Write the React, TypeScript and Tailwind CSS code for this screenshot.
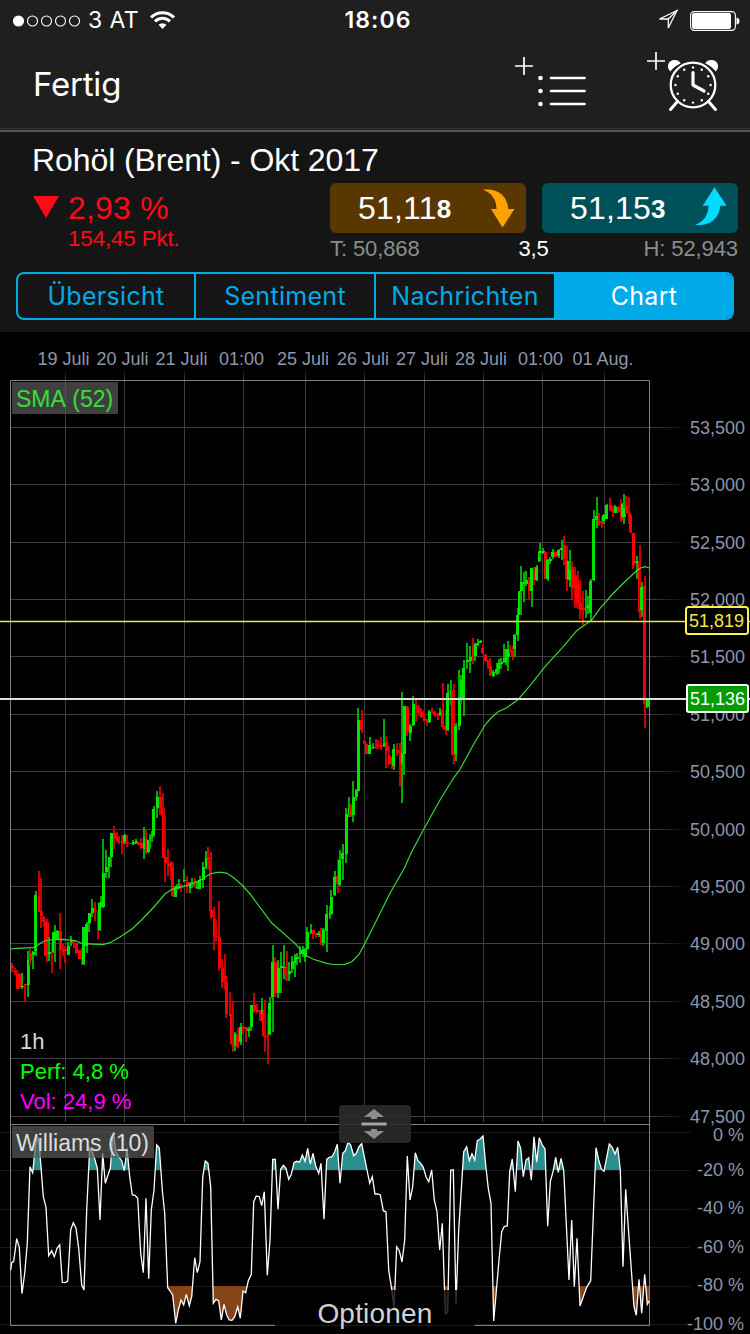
import { FC } from "react";

type Candle = [x: number, high: number, top: number, bottom: number, low: number, up: 0 | 1];
type Point = [x: number, y: number];

interface Block<T> {
  x: number;
  y: number;
  data: T[];
}

// Every block has its own origin, values inside are in thirds of a pixel
const candleBlocks: Block<Candle>[] = [
  {
    x: 0,
    y: 840,
    data: [
      [36, 370, 378, 384, 396, 0], [44, 385, 392, 396, 404, 0], [52, 390, 402, 445, 448, 0], [58, 400, 402, 445, 448, 0],
      [66, 400, 438, 442, 446, 1], [75, 432, 433, 436, 486, 0], [84, 333, 360, 436, 470, 1], [90, 327, 340, 360, 378, 0],
      [99, 333, 335, 345, 387, 1], [107, 153, 165, 333, 348, 1], [117, 93, 168, 212, 215, 0], [123, 114, 212, 228, 264, 0],
      [131, 228, 230, 246, 262, 0], [136, 237, 246, 345, 348, 0], [141, 237, 246, 345, 366, 0], [147, 291, 336, 342, 363, 1],
      [156, 306, 336, 340, 399, 0], [161, 276, 276, 336, 340, 1], [165, 255, 276, 300, 366, 1], [171, 270, 274, 300, 300, 1],
      [180, 219, 273, 330, 387, 0], [189, 312, 327, 336, 348, 0], [195, 318, 327, 333, 369, 0], [204, 306, 318, 344, 345, 1],
      [213, 288, 300, 305, 318, 1], [221, 300, 303, 310, 324, 0], [228, 309, 309, 340, 342, 0], [237, 330, 330, 356, 358, 0],
      [246, 324, 354, 360, 375, 0], [251, 261, 262, 372, 375, 1], [260, 246, 252, 318, 339, 1], [268, 219, 220, 248, 276, 1],
      [276, 177, 205, 219, 230, 1], [285, 186, 210, 214, 243, 0], [294, 213, 213, 267, 297, 0], [299, 186, 188, 270, 273, 1],
      [303, 168, 186, 200, 201, 1],
    ],
  },
  {
    x: 100,
    y: 780,
    data: [
      [9, 177, 278, 380, 384, 1], [18, 210, 260, 276, 294, 1], [27, 230, 232, 260, 294, 1], [33, 158, 160, 232, 260, 1],
      [42, 138, 158, 178, 207, 0], [51, 156, 170, 183, 186, 0], [58, 168, 183, 186, 192, 0], [66, 165, 186, 192, 222, 0],
      [74, 162, 165, 187, 192, 1], [81, 165, 187, 190, 201, 0], [90, 188, 189, 192, 192, 0], [99, 180, 185, 192, 196, 1],
      [108, 177, 184, 188, 192, 1], [116, 186, 187, 195, 196, 0], [124, 174, 190, 204, 207, 0], [132, 141, 174, 207, 237, 1],
      [138, 150, 177, 216, 222, 0], [144, 180, 180, 217, 218, 1], [150, 162, 174, 178, 206, 1], [156, 153, 168, 172, 186, 1],
      [161, 78, 87, 165, 168, 1], [171, 33, 52, 84, 114, 1], [180, 18, 50, 84, 105, 0], [188, 40, 84, 108, 110, 0],
      [191, 84, 108, 233, 234, 0], [195, 108, 230, 248, 306, 0], [204, 207, 250, 258, 288, 0], [213, 243, 250, 264, 300, 0],
      [218, 246, 264, 348, 351, 0], [226, 318, 324, 350, 351, 1], [230, 312, 318, 324, 330, 1], [237, 297, 318, 322, 327, 1],
      [243, 312, 316, 320, 336, 0], [252, 267, 300, 304, 306, 1], [261, 288, 306, 316, 339, 0], [270, 306, 312, 324, 339, 1],
      [276, 294, 308, 312, 324, 1], [284, 294, 306, 322, 324, 0], [292, 303, 320, 324, 326, 1], [299, 288, 300, 326, 327, 1],
      [309, 246, 262, 300, 324, 1], [318, 213, 234, 260, 267, 1], [324, 201, 230, 238, 270, 0], [331, 238, 240, 390, 393, 0],
      [333, 216, 390, 412, 417, 0], [342, 381, 417, 467, 510, 0], [348, 420, 467, 472, 486, 0], [357, 363, 470, 564, 573, 0],
      [366, 537, 564, 605, 624, 0], [375, 522, 588, 606, 630, 0], [379, 594, 605, 702, 714, 0], [390, 636, 702, 706, 708, 0],
      [395, 702, 702, 793, 796, 0], [399, 666, 793, 797, 816, 0], [405, 756, 762, 796, 813, 1], [413, 744, 764, 802, 804, 0],
      [422, 730, 742, 786, 795, 1], [429, 738, 742, 746, 762, 0], [438, 741, 742, 746, 786, 0], [446, 740, 748, 752, 771, 1],
      [453, 675, 676, 742, 753, 1], [462, 639, 675, 694, 699, 0], [471, 672, 690, 697, 700, 0], [480, 690, 697, 702, 723, 0],
      [486, 654, 690, 702, 723, 1], [491, 690, 692, 767, 770, 0], [495, 660, 767, 768, 816, 0], [504, 702, 764, 768, 852, 0],
      [509, 651, 668, 762, 765, 1], [516, 546, 546, 652, 654, 1], [519, 495, 546, 650, 756, 1], [526, 531, 545, 638, 651, 0],
      [534, 540, 565, 640, 654, 1], [543, 516, 558, 563, 639, 1], [552, 495, 561, 565, 597, 1], [557, 564, 564, 583, 600, 0],
      [561, 513, 582, 584, 603, 0], [567, 546, 572, 582, 603, 1], [576, 528, 542, 568, 579, 1], [585, 522, 532, 550, 591, 1],
      [591, 520, 530, 536, 555, 1], [600, 498, 512, 522, 549, 1], [609, 498, 508, 522, 530, 1], [615, 505, 508, 530, 546, 1],
      [622, 441, 456, 508, 510, 1], [633, 432, 450, 456, 462, 1], [640, 450, 450, 462, 477, 0], [648, 459, 460, 466, 474, 0],
      [656, 452, 460, 466, 471, 1], [663, 444, 462, 490, 495, 0], [669, 444, 450, 490, 498, 1], [680, 375, 402, 452, 516, 1],
      [690, 378, 400, 404, 417, 1], [694, 330, 350, 402, 405, 1], [704, 273, 291, 346, 348, 1], [713, 237, 287, 312, 339, 0],
      [719, 210, 240, 314, 317, 1], [728, 192, 220, 238, 300, 1], [738, 84, 102, 222, 249, 1],
    ],
  },
  {
    x: 250,
    y: 680,
    data: [
      [297, 351, 384, 402, 412, 1], [302, 372, 382, 408, 411, 0], [310, 303, 350, 405, 426, 1], [318, 326, 332, 350, 363, 1],
      [325, 84, 120, 334, 336, 1], [335, 90, 120, 150, 159, 0], [342, 180, 184, 190, 192, 0], [349, 189, 192, 221, 222, 0],
      [359, 171, 195, 221, 222, 1], [369, 189, 200, 202, 207, 1], [378, 177, 192, 198, 207, 0], [384, 180, 194, 198, 207, 0],
      [393, 171, 195, 200, 210, 0], [402, 117, 189, 198, 200, 1], [408, 168, 186, 212, 264, 0], [418, 198, 228, 252, 255, 0],
      [426, 231, 233, 254, 267, 0], [431, 192, 206, 258, 270, 1], [441, 189, 210, 218, 228, 0], [450, 189, 222, 254, 318, 0],
      [456, 36, 219, 250, 369, 1], [463, 78, 78, 222, 285, 1], [471, 78, 80, 156, 168, 0], [480, 132, 138, 158, 183, 1],
      [489, 48, 72, 136, 138, 1], [498, 57, 78, 88, 126, 0], [506, 75, 88, 98, 108, 0], [513, 84, 96, 112, 114, 0],
      [522, 90, 114, 120, 126, 0], [530, 117, 120, 124, 138, 0], [537, 90, 96, 126, 129, 1], [545, 84, 93, 96, 98, 0],
      [554, 93, 96, 104, 112, 0], [563, 99, 102, 104, 120, 0], [570, 84, 96, 104, 108, 1],
    ],
  },
  {
    x: 430,
    y: 480,
    data: [
      [38, 609, 690, 741, 747, 0], [47, 690, 738, 750, 765, 0], [53, 612, 640, 750, 753, 1], [63, 600, 634, 645, 675, 1],
      [67, 630, 630, 823, 826, 0], [72, 612, 822, 826, 852, 0], [77, 729, 738, 822, 843, 1], [87, 570, 650, 738, 750, 1],
      [94, 585, 600, 655, 672, 1], [101, 540, 565, 655, 708, 1], [111, 489, 540, 546, 567, 1], [120, 498, 530, 544, 579, 1],
      [129, 474, 500, 532, 552, 0], [135, 490, 492, 528, 543, 1], [143, 477, 489, 494, 498, 1], [152, 480, 484, 488, 490, 1],
      [158, 492, 504, 520, 522, 0], [167, 522, 524, 543, 546, 0], [174, 540, 543, 558, 566, 0], [181, 534, 558, 584, 587, 0],
      [189, 570, 576, 587, 591, 1], [200, 549, 566, 578, 585, 1], [206, 537, 550, 566, 582, 1], [214, 534, 546, 552, 567, 1],
      [222, 492, 534, 546, 549, 1], [229, 507, 508, 545, 555, 1], [234, 483, 508, 530, 573, 1], [240, 495, 510, 516, 520, 0],
      [248, 498, 514, 530, 540, 0], [254, 462, 466, 508, 531, 1], [263, 384, 404, 465, 483, 1], [269, 333, 333, 404, 405, 1],
      [273, 258, 306, 333, 404, 1], [282, 276, 306, 312, 366, 1], [288, 273, 300, 312, 318, 1], [297, 291, 306, 334, 357, 0],
      [305, 264, 264, 332, 381, 1], [313, 261, 275, 300, 315, 0], [320, 255, 262, 300, 303, 1], [327, 213, 216, 243, 246, 1],
      [331, 189, 213, 218, 234, 1], [339, 204, 213, 219, 222, 1], [345, 216, 217, 295, 297, 0], [353, 237, 240, 297, 303, 1],
      [360, 231, 238, 242, 252, 1], [368, 207, 215, 232, 236, 1], [376, 213, 216, 230, 231, 0], [386, 207, 210, 228, 234, 1],
      [395, 180, 205, 210, 240, 1], [402, 168, 196, 238, 255, 0], [410, 198, 240, 296, 333, 0], [415, 242, 244, 298, 300, 1],
      [420, 210, 270, 300, 320, 1], [426, 243, 262, 324, 360, 0], [434, 261, 285, 324, 384, 0], [440, 285, 288, 370, 384, 0],
      [444, 273, 310, 372, 386, 0], [451, 300, 370, 390, 417, 0], [459, 333, 385, 390, 435, 0], [468, 330, 381, 384, 414, 1],
      [475, 348, 376, 384, 402, 1], [482, 297, 303, 400, 426, 1], [491, 90, 118, 300, 303, 1], [500, 51, 108, 120, 144, 1],
      [507, 99, 122, 128, 138, 0], [516, 110, 125, 132, 144, 0], [521, 102, 104, 122, 132, 1], [530, 72, 75, 117, 118, 1],
      [540, 54, 74, 90, 92, 0], [548, 78, 90, 96, 110, 0], [555, 76, 80, 98, 99, 1], [564, 78, 82, 97, 99, 0],
      [573, 57, 97, 120, 126, 0], [578, 70, 73, 112, 114, 1], [582, 42, 84, 112, 132, 1], [588, 48, 78, 98, 102, 0],
      [597, 51, 98, 104, 132, 0], [602, 105, 106, 156, 159, 0], [610, 159, 160, 256, 267, 0], [620, 228, 243, 250, 297, 1],
      [627, 243, 250, 390, 395, 0], [630, 195, 380, 396, 417, 0], [635, 306, 322, 390, 411, 1], [644, 288, 318, 672, 744, 0],
      [652, 657, 660, 682, 684, 1],
    ],
  },
];

const williamsBlocks: Block<Point>[] = [
  {
    x: 0,
    y: 1090,
    data: [
      [32, 540], [35, 518], [41, 514], [50, 446], [58, 472], [66, 611], [74, 550], [82, 460], [90, 230], [98, 248],
      [106, 170], [113, 140], [118, 165], [130, 320], [138, 352], [146, 497], [155, 482], [163, 500], [171, 475],
      [179, 464], [187, 577], [195, 578], [203, 574], [212, 420], [220, 398], [228, 415], [236, 475], [245, 585],
      [252, 600], [260, 360], [269, 175], [277, 185], [285, 210], [292, 235], [300, 390], [308, 190], [316, 280],
      [324, 255], [331, 235], [340, 125], [348, 185], [356, 200], [365, 212], [373, 242], [381, 175], [389, 260],
      [397, 315], [405, 316], [413, 325], [422, 490], [430, 548], [438, 325], [446, 566], [454, 360], [462, 300],
      [470, 165], [478, 174], [487, 300], [494, 370], [503, 593], [510, 603], [518, 615], [527, 700], [535, 660],
      [543, 630], [551, 645], [559, 613], [568, 647], [575, 620], [584, 503], [592, 548], [600, 515], [608, 262],
      [616, 213], [624, 220], [632, 290],
    ],
  },
  {
    x: 200,
    y: 1090,
    data: [
      [40, 640], [48, 628], [56, 632], [64, 690], [72, 643], [80, 675], [88, 690], [96, 691], [104, 680], [113, 650],
      [121, 685], [129, 603], [137, 608], [145, 572], [154, 553], [161, 335], [169, 318], [178, 320], [185, 347],
      [193, 305], [202, 556], [210, 450], [218, 208], [226, 208], [234, 358], [242, 238], [250, 226], [258, 235],
      [266, 268], [274, 253], [282, 218], [290, 214], [299, 216], [307, 195], [315, 214], [323, 175], [331, 222],
      [339, 190], [347, 228], [356, 250], [363, 220], [372, 388], [380, 208], [388, 202], [396, 200], [404, 185],
      [412, 163], [420, 280], [428, 190], [436, 182], [444, 156], [452, 165], [461, 197], [469, 190], [477, 170],
      [485, 161], [493, 200], [509, 280], [517, 260], [525, 312], [533, 312], [541, 315], [550, 362], [558, 366],
      [566, 540], [575, 598], [582, 655], [590, 470], [598, 482], [606, 516], [614, 450], [622, 198], [630, 330],
      [638, 290],
    ],
  },
  {
    x: 400,
    y: 1090,
    data: [
      [46, 188], [54, 212], [62, 220], [70, 232], [78, 260], [86, 275], [95, 240], [103, 330], [111, 365], [119, 480],
      [127, 400], [136, 672], [143, 665], [152, 241], [160, 239], [168, 642], [176, 420], [191, 185], [200, 170],
      [208, 212], [216, 191], [224, 210], [232, 152], [240, 148], [249, 138], [257, 225], [265, 295], [273, 340],
      [281, 693], [290, 590], [297, 510], [305, 425], [313, 409], [322, 408], [329, 245], [337, 207], [346, 305],
      [354, 153], [362, 175], [370, 260], [378, 210], [386, 203], [394, 271], [402, 140], [410, 217], [418, 143],
      [427, 165], [435, 177], [443, 409], [451, 275], [459, 245], [467, 202], [475, 247], [483, 205], [491, 240],
      [507, 570], [515, 390], [523, 590], [531, 445], [540, 648], [550, 620], [560, 592], [572, 572], [588, 173],
      [596, 210], [604, 237], [612, 244], [628, 162], [637, 173], [645, 192], [653, 172], [661, 240], [669, 530],
      [677, 298], [686, 430], [702, 650], [709, 676], [717, 568], [725, 670], [734, 553], [742, 643], [748, 632],
    ],
  },
];

const sma: Point[] = [
  [11, 949], [17, 948.3], [33, 947.7], [38, 945], [43, 941.7], [48, 940], [63, 939.3], [75, 940.7], [83, 943.7],
  [103, 944.7], [110, 942.7], [120, 937], [132, 929], [142, 919.5], [153, 908], [165, 894], [172, 889.3], [187, 885.7],
  [202, 879.3], [210, 874], [217, 872.3], [222, 872.3], [227, 873.3], [234, 878], [242, 885], [250, 894], [271.7, 923],
  [295, 943.3], [305, 955], [313.3, 959.3], [326.7, 963.3], [333.3, 964.5], [345, 964.3], [351.7, 961.7], [359, 954.3],
  [365, 943.3], [376.7, 920], [390, 893.3], [404.3, 868.3], [411.7, 851.7], [424.3, 828.3], [440, 800], [452.7, 779.3],
  [460, 769.3], [472.7, 746], [485, 725], [491, 718], [498.3, 711.7], [506.7, 707.7], [517.7, 700], [530, 685.7],
  [545, 666.7], [563.3, 646.7], [576.7, 630.7], [591.7, 620], [600, 608.3], [611.7, 595], [623.3, 583.3], [635, 572.3],
  [640, 568.3], [645, 566.7], [649.3, 568],
];

const williams = williamsBlocks
  .flatMap((block) => block.data.map(([x, y]) => `${(block.x + x / 3).toFixed(1)},${(block.y + y / 3).toFixed(1)}`))
  .join(" ");

const dates = [
  { label: "19 Juli", x: 37.5, line: 65.5 },
  { label: "20 Juli", x: 96.5, line: 124.5 },
  { label: "21 Juli", x: 155.5, line: 184.5 },
  { label: "01:00", x: 219, line: 243.5 },
  { label: "25 Juli", x: 277, line: 305.5 },
  { label: "26 Juli", x: 337, line: 364.5 },
  { label: "27 Juli", x: 396, line: 424.5 },
  { label: "28 Juli", x: 455, line: 483.5 },
  { label: "01:00", x: 518, line: 542.5 },
  { label: "01 Aug.", x: 572.5, line: 604.5 },
];

const prices = [
  { label: "53,500", y: 427.5 },
  { label: "53,000", y: 484.5 },
  { label: "52,500", y: 542.5 },
  { label: "52,000", y: 599.5 },
  { label: "51,500", y: 656.5 },
  { label: "51,000", y: 714.5 },
  { label: "50,500", y: 771.5 },
  { label: "50,000", y: 829.5 },
  { label: "49,500", y: 886.5 },
  { label: "49,000", y: 943.5 },
  { label: "48,500", y: 1001.5 },
  { label: "48,000", y: 1058.5 },
  { label: "47,500", y: 1116.5 },
];

const percents = [
  { label: "0 %", y: 1132.5, text: 1141 },
  { label: "-20 %", y: 1170.5, text: 1176 },
  { label: "-40 %", y: 1209.5, text: 1214 },
  { label: "-60 %", y: 1247.5, text: 1253 },
  { label: "-80 %", y: 1286.5, text: 1291 },
  { label: "-100 %", y: 1324.5, text: 1330 },
];

const tabs = ["Übersicht", "Sentiment", "Nachrichten", "Chart"];

const StatusBar: FC = () => {
  return (
    <div className="grid h-10 grid-cols-3 items-center pl-[13px] pr-[11px] pt-px font-['Inter',sans-serif] text-[23px]">
      <div className="flex items-center">
        <svg width="68" height="12" viewBox="0 0 68 12" fill="none" stroke="#fff" strokeWidth="1.1">
          <circle cx="5.5" cy="6" r="5" fill="#fff" />
          <circle cx="19.5" cy="6" r="5" />
          <circle cx="33.5" cy="6" r="5" />
          <circle cx="47.5" cy="6" r="5" />
          <circle cx="61.5" cy="6" r="5" />
        </svg>
        <span className="ml-[7px] whitespace-nowrap tracking-[0.4px]">3 AT</span>
        <svg className="-mt-px ml-[11px]" width="25" height="18" viewBox="0 0 25 18" fill="none" stroke="#fff" strokeWidth="3">
          <path d="M1 6.4a16.3 16.3 0 0 1 23 0" />
          <path d="M5 10.4a10.7 10.7 0 0 1 15 0" />
          <path d="M12.5 18l-4-4.2a5.8 5.8 0 0 1 8 0z" fill="#fff" stroke="none" />
        </svg>
      </div>
      <div className="pl-[4px] text-center font-semibold tracking-[1.1px]">18:06</div>
      <div className="flex items-center justify-end gap-[11px]">
        <svg className="-mt-px" width="22" height="22" viewBox="0 0 22 22" fill="none" stroke="#fff" strokeWidth="1.3">
          <path d="M20 1.5L2.5 10h8.8v9z" />
          <path d="M20 1.5l-8.7 8.5" />
        </svg>
        <svg className="-mr-px" width="50" height="20" viewBox="0 0 50 20">
          <rect x="0.6" y="0.6" width="44.8" height="18.8" rx="3.6" fill="none" stroke="#fff" strokeWidth="1.1" />
          <rect x="2" y="2" width="39" height="16" rx="2" fill="#fff" />
          <path d="M46.5 6.4q3 .6 3 3.6t-3 3.6z" fill="#fff" />
        </svg>
      </div>
    </div>
  );
};

const ListIcon: FC = () => (
  <svg width="74" height="54" viewBox="514 56 74 54" stroke="#fff" fill="#fff">
    <path d="M515 66h18M524 57v18" strokeWidth="1.7" />
    <path d="M551 78h33.5M551 91h33.5M551 104h33.5" strokeWidth="2.7" strokeLinecap="round" />
    <circle cx="540.5" cy="78" r="2.3" stroke="none" />
    <circle cx="540.5" cy="91" r="2.3" stroke="none" />
    <circle cx="540.5" cy="104" r="2.3" stroke="none" />
  </svg>
);

const ClockIcon: FC = () => (
  <svg width="74" height="62" viewBox="646 51 74 62" stroke="#fff" fill="none">
    <path d="M647 61h18M656 52v18" strokeWidth="1.7" />
    <circle cx="693" cy="85" r="22.3" strokeWidth="2.3" />
    <path d="M670.3 71.5C666.5 68 667.5 62 672 60.500C675.5 59.3 679 60.500 680.8 63.300C676.5 65.300 673 68 670.3 71.500z" fill="#fff" stroke="none" />
    <path d="M715.7 71.5C719.5 68 718.5 62 714 60.500C710.5 59.3 707 60.500 705.2 63.300C709.5 65.300 713 68 715.7 71.500z" fill="#fff" stroke="none" />
    <path d="M677.5 101.5l-7 8M708.5 101.5l7 8" strokeWidth="3" strokeLinecap="round" />
    <path d="M693 72.5v12.5l11 6" strokeWidth="3.2" strokeLinecap="round" strokeLinejoin="round" />
    {Array.from({ length: 12 }, (_, i) => (
      <circle
        key={i}
        cx={693 + 17.6 * Math.sin((i * Math.PI) / 6)}
        cy={85 - 17.6 * Math.cos((i * Math.PI) / 6)}
        r="1.2"
        fill="#fff"
        stroke="none"
      />
    ))}
  </svg>
);

const NavBar: FC = () => {
  return (
    <div className="flex h-[88px] items-start pl-[33px] pr-[30px]">
      <h1 className="mt-[23px] font-['Inter',sans-serif] text-[33px] leading-[42px] tracking-[-0.2px]">Fertig</h1>
      <div className="ml-auto mt-[16px]">
        <ListIcon />
      </div>
      <div className="ml-[58px] mt-[11px]">
        <ClockIcon />
      </div>
    </div>
  );
};

const Quote: FC = () => {
  return (
    <div className="h-[200px] bg-[#151515] pt-[10px]">
      <h2 className="pl-[32px] text-[32px] leading-9 tracking-[-0.08px]">Rohöl (Brent) - Okt 2017</h2>
      <div className="mt-[5px] flex pl-[33px] pr-3">
        <div className="w-[297px] text-[#ff0a17]">
          <div className="flex h-[50px] items-center">
            <svg className="-mt-[3px]" width="26" height="22" viewBox="0 0 26 22">
              <path d="M0 0h26l-13 22z" fill="#ff0a17" />
            </svg>
            <span className="ml-[9px] text-[32px] leading-none tracking-[0.2px]">2,93 %</span>
          </div>
          <div className="-mt-[7px] pl-[35px] text-[22.5px] leading-[26px] tracking-[-0.2px]">154,45 Pkt.</div>
        </div>
        <div className="flex-1">
          <div className="flex gap-4">
            <div className="flex h-[50px] w-[196px] items-center rounded-md bg-[#5a3700] pl-[28px]">
              <span className="text-[32px] tracking-[0.2px]">51,11</span>
              <span className="mt-[3px] text-[26px] font-bold">8</span>
              <svg className="ml-auto mr-[11px] mt-px" width="32" height="39" viewBox="0 0 32 39">
                <path d="M0 .8C13-1 24 5 25.3 20H31.5L19.5 38.5 8 20h5.5C13.500 11 9 4 0 .8z" fill="#ffa200" />
              </svg>
            </div>
            <div className="flex h-[50px] w-[196px] items-center rounded-md bg-[#00505a] pl-[28px]">
              <span className="text-[32px] tracking-[0.2px]">51,15</span>
              <span className="mt-[3px] text-[26px] font-bold">3</span>
              <svg className="-mt-1 ml-auto mr-[11px]" width="32" height="39" viewBox="0 0 32 39">
                <path d="M0 37.8C13 39.5 24 33.5 25.3 18.8H31.5L19.5 .3 7.8 18.8h5.7C13.5 27.5 9 34.8 0 37.8z" fill="#00dcff" />
              </svg>
            </div>
          </div>
          <div className="mt-[3px] flex justify-between text-[22px] leading-[26px] tracking-[-0.1px] text-[#8c8c8c]">
            <span>T: 50,868</span>
            <span className="ml-[4px] text-white">3,5</span>
            <span>H: 52,943</span>
          </div>
        </div>
      </div>
      <div className="mx-4 mt-[10px] grid h-12 grid-cols-[178px_180px_180px_1fr] overflow-hidden rounded-lg border-2 border-[#00a9e8] font-['Inter',sans-serif] text-[25px] tracking-[0.3px] text-[#00a9e8]">
        {tabs.map((tab) => (
          <div
            key={tab}
            className="flex items-center justify-center border-r-2 border-[#00a9e8] pt-[2px] last:border-r-0 last:bg-[#00a9e8] last:text-white"
          >
            {tab}
          </div>
        ))}
      </div>
    </div>
  );
};

const Chart: FC = () => {
  return (
    <svg className="block" width="750" height="1002" viewBox="0 332 750 1002" fontFamily="'Liberation Sans', Arial, sans-serif">
      <defs>
        <linearGradient id="fadeX" gradientUnits="userSpaceOnUse" x1="650" x2="690" y1="0" y2="0">
          <stop offset="0" stopColor="#3f3f3f" />
          <stop offset="1" stopColor="#000" />
        </linearGradient>
        <linearGradient id="fadeY" gradientUnits="userSpaceOnUse" x1="0" x2="0" y1="368" y2="381">
          <stop offset="0" stopColor="#000" />
          <stop offset="1" stopColor="#3f3f3f" />
        </linearGradient>
        <clipPath id="overbought">
          <rect x="11" y="1125" width="638" height="45" />
        </clipPath>
        <clipPath id="oversold">
          <rect x="11" y="1286" width="638" height="39" />
        </clipPath>
      </defs>

      {/* grid */}
      {dates.map(({ label, x, line }) => (
        <g key={line}>
          <rect x={line - 0.5} y="368" width="1" height="754" fill="url(#fadeY)" />
          <text x={x} y="365" fontSize="18" fill="#8e96a8">
            {label}
          </text>
        </g>
      ))}
      {prices.map(({ label, y }) => (
        <g key={label}>
          <rect x="10" y={y - 0.5} width="680" height="1" fill="url(#fadeX)" />
          <text x="745" y={y + 6.5} fontSize="18" textAnchor="end" fill="#8e96a8">
            {label}
          </text>
        </g>
      ))}
      {percents.map(({ label, y, text }) => (
        <g key={label}>
          <path d={`M0 ${y}H690`} stroke="#191919" />
          <text x="744" y={text} fontSize="18" textAnchor="end" fill="#8e96a8">
            {label}
          </text>
        </g>
      ))}
      <path d="M10.5 1325.5V380.5H649.5V1325.5ZM10.5 1124.5H649.5" fill="none" stroke="#808080" />

      {/* candles */}
      {candleBlocks.map((block) => (
        <g key={block.x} transform={`translate(${block.x} ${block.y}) scale(${1 / 3})`} shapeRendering="crispEdges">
          {block.data.map(([x, high, top, bottom, low, up]) => (
            <g key={x}>
              <rect x={x - 3} y={high} width="6" height={low - high} fill={up ? "#00aa00" : "#c80000"} />
              <rect x={x - 4.5} y={top} width="9" height={Math.max(bottom - top, 3)} fill={up ? "#00e400" : "#ff0000"} />
            </g>
          ))}
        </g>
      ))}
      <polyline points={sma.join(" ")} fill="none" stroke="#35d935" strokeWidth="1.2" />

      {/* price levels */}
      <path d="M0 621.5H750" stroke="#f5e642" strokeWidth="1.3" />
      <path d="M0 699H750" stroke="#e0e0e0" strokeWidth="2" />
      <rect x="686" y="607" width="62" height="27" rx="2.5" fill="#000" stroke="#fff04d" strokeWidth="2" />
      <text x="744" y="627" fontSize="18" textAnchor="end" fill="#f5e642">
        51,819
      </text>
      <rect x="687" y="685" width="61" height="27" rx="2" fill="#009b00" stroke="#fff" strokeWidth="2" />
      <text x="745" y="705" fontSize="18" textAnchor="end" fill="#fff">
        51,136
      </text>

      {/* williams */}
      <polygon points={`10.7,1170 ${williams} 649.3,1170`} fill="#2b8e8e" clipPath="url(#overbought)" />
      <polygon points={`10.7,1286 ${williams} 649.3,1286`} fill="#854317" clipPath="url(#oversold)" />
      <polyline points={williams} fill="none" stroke="#fff" strokeWidth="1.3" />
    </svg>
  );
};

export default function App() {
  return (
    <div className="h-[1334px] w-[750px] overflow-hidden bg-black font-['Liberation_Sans',Arial,sans-serif] text-white">
      <header className="h-[132px] border-b-2 border-[#555557] bg-[#1f1f1f]">
        <StatusBar />
        <NavBar />
        <div className="h-px bg-[#38363a]" />
      </header>
      <Quote />
      <main className="relative">
        <Chart />
        <div className="absolute left-3 top-[50px] flex h-[32px] w-[106px] items-center bg-[#5a5a5a]/70 pl-[4px] pt-[2px] text-[23px] text-[#35e035]">
          SMA&nbsp;(52)
        </div>
        <div className="absolute left-[20px] top-[695px] text-[22px] leading-[30px]">
          <p className="text-[#d8d8d8]">1h</p>
          <p className="text-[#00ff00]">Perf: 4,8 %</p>
          <p className="text-[#ff00ff]">Vol: 24,9 %</p>
        </div>
        <div className="absolute left-3 top-[794px] flex h-8 w-[142px] items-center whitespace-nowrap bg-[#5a5a5a]/70 pl-1 pt-[2px] text-[23px] text-[#dcdcdc]">
          Williams (10)
        </div>
        <div className="absolute left-[339px] top-[773px] h-[38px] w-[72px] rounded bg-[#2b2b2b]/90">
          <svg width="72" height="38" viewBox="0 0 72 38" fill="#8c8c8c">
            <path d="M35 4l10 8h-7v2h-6v-2h-7zM35 34l10-8h-7v-2h-6v2h-7z" />
            <rect x="22.5" y="17.5" width="25" height="3" fill="#a5a5a5" />
          </svg>
        </div>
        <div className="absolute bottom-0 left-[275px] flex h-[44px] w-[200px] justify-center bg-black/80 text-[28px] leading-[47px] tracking-[0.2px] text-[#d2d2d2]">
          Optionen
        </div>
      </main>
    </div>
  );
}
